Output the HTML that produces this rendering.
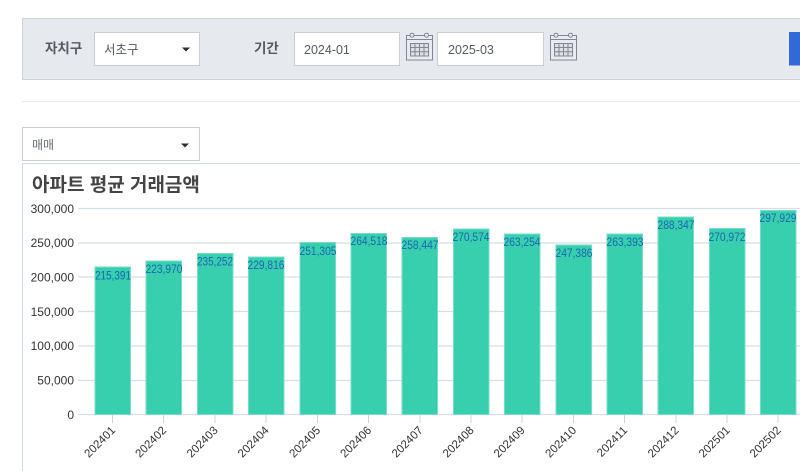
<!DOCTYPE html>
<html lang="ko">
<head>
<meta charset="utf-8">
<style>
html,body{margin:0;padding:0;background:#fff;width:800px;height:471px;overflow:hidden}
svg{display:block;filter:blur(.25px)}
text{font-family:"Liberation Sans","Noto Sans CJK KR",sans-serif}
.k{font-family:"Liberation Sans","Noto Sans CJK KR",sans-serif}
.y{font-size:12px;fill:#333;text-anchor:end}
.x{font-size:11.500px;fill:#333;text-anchor:end}
.v{font-size:12px;fill:#1b66b4;text-anchor:middle}
.g{stroke:#d6dfe7;stroke-width:1.2}
.b{fill:#38cfae;stroke:#7adcc8;stroke-width:1}
</style>
</head>
<body>
<svg width="800" height="471" viewBox="0 0 800 471" xmlns="http://www.w3.org/2000/svg">
<defs>
<g id="cal" fill="none" stroke="#7f8794" stroke-width="1">
<rect x="0.5" y="3.5" width="26" height="24.5" fill="#e9ebf0"/>
<line x1="0.5" y1="7.5" x2="26.5" y2="7.5"/>
<circle cx="6" cy="3.2" r="2" fill="#e6e9ee"/>
<circle cx="20.5" cy="3.2" r="2" fill="#e6e9ee"/>
<rect x="4.5" y="11.5" width="18" height="12.5" fill="#dcdfe4"/>
<path d="M9 11.500V24M13.500 11.500V24M18 11.500V24M4.500 15.500H22.500M4.500 19.700H22.500"/>
</g>
</defs>

<!-- search bar -->
<rect x="22.500" y="18.500" width="778" height="61" fill="#e6e9ee" stroke="#cfd3d8"/>
<text x="45" y="53" class="k" font-size="13.500" font-weight="700" fill="#555a62">자치구</text>
<rect x="94.500" y="32.500" width="105" height="33" fill="#fff" stroke="#c9ced6"/>
<text x="104" y="54" class="k" font-size="12.500" fill="#555a62">서초구</text>
<path d="M182 47.500h8l-4 4z" fill="#2b2b2b"/>
<text x="254" y="53" class="k" font-size="13.500" font-weight="700" fill="#555a62">기간</text>
<rect x="294.500" y="32.500" width="105" height="33" fill="#fff" stroke="#c9ced6"/>
<text x="304" y="54" font-size="12.500" fill="#555a62">2024-01</text>
<use href="#cal" transform="translate(406,32)"/>
<rect x="437.500" y="32.500" width="106" height="33" fill="#fff" stroke="#c9ced6"/>
<text x="448" y="54" font-size="12.500" fill="#555a62">2025-03</text>
<use href="#cal" transform="translate(550,32)"/>
<rect x="789" y="32" width="11" height="33.500" fill="#3369d6"/>

<line x1="22" y1="101.500" x2="800" y2="101.500" stroke="#e8eaec"/>

<!-- dropdown -->
<rect x="22.500" y="127.500" width="177" height="33" fill="#fff" stroke="#c9ced6"/>
<text x="32" y="149" class="k" font-size="12" fill="#666b73">매매</text>
<path d="M181 143.500h8l-4 4z" fill="#2b2b2b"/>

<!-- chart panel -->
<path d="M22.500 471V163.500H800" fill="none" stroke="#cfdbe0"/>
<text x="32" y="191" class="k" font-size="19" font-weight="700" fill="#444">아파트 평균 거래금액</text>

<!-- grid -->
<line class="g" x1="78" y1="208.500" x2="800" y2="208.500"/>
<line class="g" x1="78" y1="243" x2="800" y2="243"/>
<line class="g" x1="78" y1="277" x2="800" y2="277"/>
<line class="g" x1="78" y1="311.500" x2="800" y2="311.500"/>
<line class="g" x1="78" y1="346" x2="800" y2="346"/>
<line class="g" x1="78" y1="380.500" x2="800" y2="380.500"/>
<line class="g" x1="78" y1="414.500" x2="800" y2="414.500"/>

<text class="y" x="74" y="213">300,000</text>
<text class="y" x="74" y="247">250,000</text>
<text class="y" x="74" y="281.500">200,000</text>
<text class="y" x="74" y="316">150,000</text>
<text class="y" x="74" y="350">100,000</text>
<text class="y" x="74" y="384.500">50,000</text>
<text class="y" x="74" y="419">0</text>

<!-- bars -->
<rect class="b" x="95" y="267" width="35.500" height="147.500"/>
<rect class="b" x="146" y="261" width="35.500" height="153.500"/>
<rect class="b" x="197.500" y="253.500" width="35.500" height="161"/>
<rect class="b" x="248.500" y="257" width="35.500" height="157.500"/>
<rect class="b" x="300" y="242.500" width="35.500" height="172"/>
<rect class="b" x="351" y="233.500" width="35.500" height="181"/>
<rect class="b" x="402" y="237.500" width="35.500" height="177"/>
<rect class="b" x="453.500" y="229" width="35.500" height="185.500"/>
<rect class="b" x="504.500" y="234" width="35.500" height="180.500"/>
<rect class="b" x="556" y="245" width="35.500" height="169.500"/>
<rect class="b" x="607" y="234" width="35.500" height="180.500"/>
<rect class="b" x="658" y="217" width="35.500" height="197.500"/>
<rect class="b" x="709.500" y="228.500" width="35.500" height="186"/>
<rect class="b" x="760.500" y="210.500" width="35.500" height="204"/>

<!-- values -->
<text class="v" x="113" y="279.500" textLength="36" lengthAdjust="spacingAndGlyphs">215,391</text>
<text class="v" x="164" y="273" textLength="37" lengthAdjust="spacingAndGlyphs">223,970</text>
<text class="v" x="215" y="265.500" textLength="36" lengthAdjust="spacingAndGlyphs">235,252</text>
<text class="v" x="266" y="269" textLength="37" lengthAdjust="spacingAndGlyphs">229,816</text>
<text class="v" x="318" y="255" textLength="37" lengthAdjust="spacingAndGlyphs">251,305</text>
<text class="v" x="369" y="245" textLength="37" lengthAdjust="spacingAndGlyphs">264,518</text>
<text class="v" x="420" y="249" textLength="37" lengthAdjust="spacingAndGlyphs">258,447</text>
<text class="v" x="471" y="241" textLength="37" lengthAdjust="spacingAndGlyphs">270,574</text>
<text class="v" x="522" y="246" textLength="37" lengthAdjust="spacingAndGlyphs">263,254</text>
<text class="v" x="574" y="257" textLength="37" lengthAdjust="spacingAndGlyphs">247,386</text>
<text class="v" x="625" y="246" textLength="37" lengthAdjust="spacingAndGlyphs">263,393</text>
<text class="v" x="676" y="229" textLength="37" lengthAdjust="spacingAndGlyphs">288,347</text>
<text class="v" x="727" y="241" textLength="37" lengthAdjust="spacingAndGlyphs">270,972</text>
<text class="v" x="778" y="222" textLength="37" lengthAdjust="spacingAndGlyphs">297,929</text>

<!-- ticks -->
<path d="M112.500 415v8M163.500 415v8M215 415v8M266 415v8M317.500 415v8M368.500 415v8M420 415v8M471 415v8M522 415v8M573.500 415v8M624.500 415v8M676 415v8M727 415v8M778 415v8" stroke="#ccd6de" stroke-width="1" fill="none"/>

<!-- x labels -->
<text class="x" transform="translate(116,431) rotate(-45)">202401</text>
<text class="x" transform="translate(167,431) rotate(-45)">202402</text>
<text class="x" transform="translate(218.500,431) rotate(-45)">202403</text>
<text class="x" transform="translate(269.500,431) rotate(-45)">202404</text>
<text class="x" transform="translate(321,431) rotate(-45)">202405</text>
<text class="x" transform="translate(372,431) rotate(-45)">202406</text>
<text class="x" transform="translate(423.500,431) rotate(-45)">202407</text>
<text class="x" transform="translate(474.500,431) rotate(-45)">202408</text>
<text class="x" transform="translate(525.500,431) rotate(-45)">202409</text>
<text class="x" transform="translate(577,431) rotate(-45)">202410</text>
<text class="x" transform="translate(628,431) rotate(-45)">202411</text>
<text class="x" transform="translate(679.500,431) rotate(-45)">202412</text>
<text class="x" transform="translate(730.500,431) rotate(-45)">202501</text>
<text class="x" transform="translate(781.500,431) rotate(-45)">202502</text>
</svg>
</body>
</html>
